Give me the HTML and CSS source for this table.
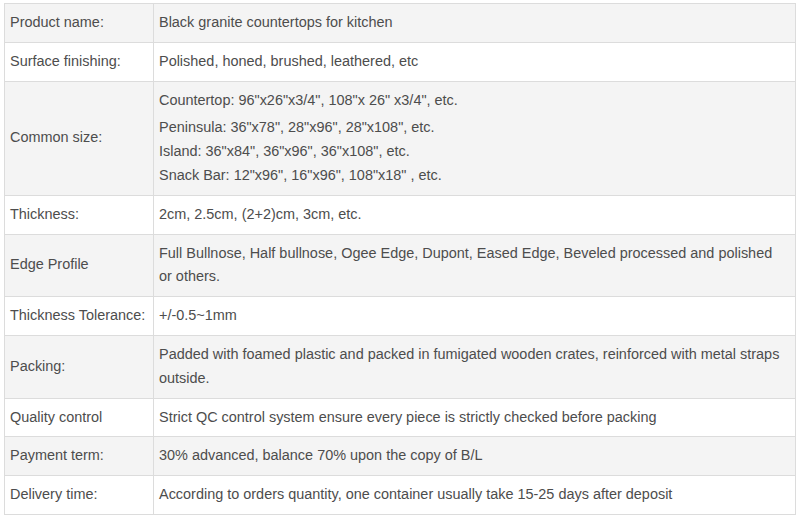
FILE: index.html
```html
<!DOCTYPE html>
<html lang="en">
<head>
<meta charset="utf-8">
<title>Black granite countertops</title>
<link rel="stylesheet" href="styles.css">
</head>
<body>
<div class="wrap">
<table class="spec">
  <tbody>
    <tr class="alt">
      <td class="label">Product name:</td>
      <td class="value">Black granite countertops for kitchen</td>
    </tr>
    <tr>
      <td class="label">Surface finishing:</td>
      <td class="value">Polished, honed, brushed, leathered, etc</td>
    </tr>
    <tr class="alt">
      <td class="label">Common size:</td>
      <td class="value">
        <p class="first">Countertop: 96"x26"x3/4", 108"x 26" x3/4", etc.</p>
        <p>Peninsula: 36"x78", 28"x96", 28"x108", etc.<br>Island: 36"x84", 36"x96", 36"x108", etc.<br>Snack Bar: 12"x96", 16"x96", 108"x18" , etc.</p>
      </td>
    </tr>
    <tr>
      <td class="label">Thickness:</td>
      <td class="value">2cm, 2.5cm, (2+2)cm, 3cm, etc.</td>
    </tr>
    <tr class="alt">
      <td class="label">Edge Profile</td>
      <td class="value">Full Bullnose, Half bullnose, Ogee Edge, Dupont, Eased Edge, Beveled processed and polished or others.</td>
    </tr>
    <tr>
      <td class="label">Thickness Tolerance:</td>
      <td class="value">+/-0.5~1mm</td>
    </tr>
    <tr class="alt">
      <td class="label">Packing:</td>
      <td class="value">Padded with foamed plastic and packed in fumigated wooden crates, reinforced with metal straps outside.</td>
    </tr>
    <tr>
      <td class="label">Quality control</td>
      <td class="value">Strict QC control system ensure every piece is strictly checked before packing</td>
    </tr>
    <tr class="alt">
      <td class="label">Payment term:</td>
      <td class="value">30% advanced, balance 70% upon the copy of B/L</td>
    </tr>
    <tr>
      <td class="label">Delivery time:</td>
      <td class="value">According to orders quantity, one container usually take 15-25 days after deposit</td>
    </tr>
  </tbody>
</table>
</div>
</body>
</html>
```

FILE: styles.css
```css
html, body {
  margin: 0;
  padding: 0;
  background: #ffffff;
}

.wrap {
  padding: 3px 4px 0 4px;
}

.spec {
  width: 792px;
  border-collapse: collapse;
  font-family: "Liberation Sans", Arial, sans-serif;
  font-size: 14.45px;
  line-height: 23.8px;
  color: #4d4d4d;
  table-layout: fixed;
}

.spec td {
  border: 1px solid #dcdcdc;
  padding: 7px 8px 7px 5px;
  vertical-align: middle;
  text-align: left;
}

.spec td.label {
  width: 142px;
  padding-right: 1px;
  white-space: nowrap;
}

.spec tr.alt td {
  background: #f4f4f4;
}

.spec p {
  margin: 0;
}

.spec p.first {
  margin-bottom: 4px;
}
```
